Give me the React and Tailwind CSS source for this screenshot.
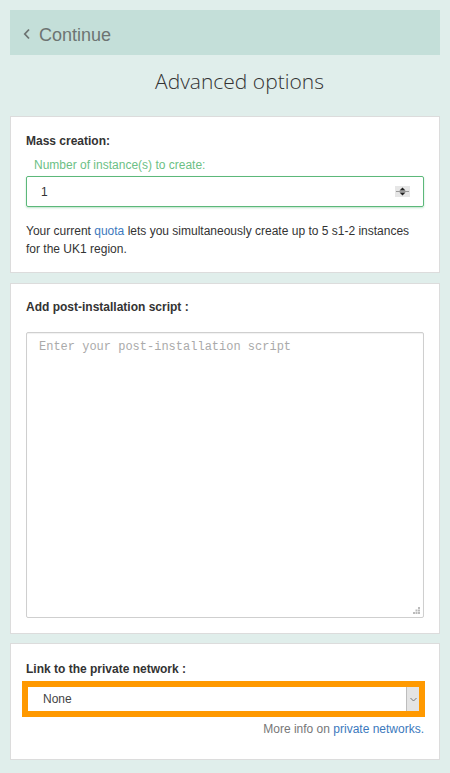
import React from "react";

function Spinner() {
  return (
    <svg width="15" height="11" viewBox="0 0 15 11" className="block">
      <rect x="0" y="0" width="15" height="11" fill="#e6e6e6" />
      <path d="M4.5 4.5 L7.5 1.5 L10.5 4.5 Z" fill="#222" />
      <path d="M4.5 6.5 L7.5 9.5 L10.5 6.5 Z" fill="#222" />
      <rect x="1" y="5" width="13" height="1" fill="#999" />
    </svg>
  );
}

function Grip() {
  return (
    <svg width="7" height="7" viewBox="0 0 7 7" className="absolute right-[3px] bottom-[3px]">
      <rect x="5" y="0" width="2" height="2" fill="#bbb" />
      <rect x="2.5" y="2.5" width="2" height="2" fill="#bbb" />
      <rect x="5" y="2.5" width="2" height="2" fill="#bbb" />
      <rect x="0" y="5" width="2" height="2" fill="#bbb" />
      <rect x="2.5" y="5" width="2" height="2" fill="#bbb" />
      <rect x="5" y="5" width="2" height="2" fill="#bbb" />
    </svg>
  );
}

export default function App() {
  return (
    <div className="min-h-[773px] bg-[#e0eeeb] p-[10px] font-['Liberation_Sans',Arial,sans-serif] text-[12px] text-[#333]">
      {/* top bar */}
      <div className="flex items-center h-[45px] bg-[#c4dfd9] pl-[13px] pt-[4px] text-[#6d7472]">
        <svg width="8" height="12" viewBox="0 0 8 12" className="mr-[8px] mt-[-2px]">
          <path d="M6 1.5 L1.8 6 L6 10.5" fill="none" stroke="#6d7472" strokeWidth="1.8" />
        </svg>
        <span className="text-[18px] leading-none">Continue</span>
      </div>

      <h1 className="h-[61px] flex items-center justify-center pl-[29px] pb-[8px] font-['Open_Sans',sans-serif] font-light text-[21px] text-[#333]">
        Advanced options
      </h1>

      {/* mass creation */}
      <div className="bg-white border border-[#dcdcdc] px-[15px] pt-[14px] pb-[14px]">
        <div className="font-bold leading-[20px]">Mass creation:</div>
        <div className="mt-[6px] ml-[8px] leading-[16px] text-[#6cbf85]">Number of instance(s) to create:</div>
        <div className="mt-[3px] h-[31px] border border-[#5cb87a] rounded-[2px] shadow-[0_1px_2px_rgba(92,184,122,0.4)] flex items-center justify-between pl-[14px] pr-[13px]">
          <span>1</span>
          <Spinner />
        </div>
        <div className="mt-[15px] leading-[18px]">
          <div>
            Your current <span className="text-[#3c79bd]">quota</span> lets you simultaneously create up to 5 s1-2 instances
          </div>
          <div>for the UK1 region.</div>
        </div>
      </div>

      {/* post-install script */}
      <div className="mt-[10px] bg-white border border-[#dcdcdc] px-[15px] pt-[13px] pb-[15px]">
        <div className="font-bold leading-[20px]">Add post-installation script :</div>
        <div className="relative mt-[15px] h-[286px] border border-[#cfcfcf] rounded-[2px] shadow-[inset_0_1px_1px_rgba(0,0,0,0.06)] px-[12px] pt-[6px]">
          <div className="font-['Liberation_Mono',monospace] text-[#aaa] leading-[16px]">
            Enter your post-installation script
          </div>
          <Grip />
        </div>
      </div>

      {/* private network */}
      <div className="mt-[9px] bg-white border border-[#dcdcdc] px-[15px] pt-[15px] pb-[20px]">
        <div className="font-bold leading-[20px]">Link to the private network :</div>
        <div className="mt-[2px] ml-[-4px] mr-[-1px] border-[6px] border-[#ff9900] h-[36px] flex bg-white">
          <div className="flex-1 flex items-center pl-[15px] text-[#444]">None</div>
          <div className="w-[13px] bg-[#e4e4e4] border-l border-[#bdbdbd] flex items-center justify-center">
            <svg width="7" height="5" viewBox="0 0 7 5">
              <path d="M0.5 1 L3.5 4 L6.5 1" fill="none" stroke="#777" strokeWidth="1" />
            </svg>
          </div>
        </div>
        <div className="mt-[2px] text-right leading-[20px] text-[#777]">
          More info on <span className="text-[#3c79bd]">private networks.</span>
        </div>
      </div>
    </div>
  );
}
